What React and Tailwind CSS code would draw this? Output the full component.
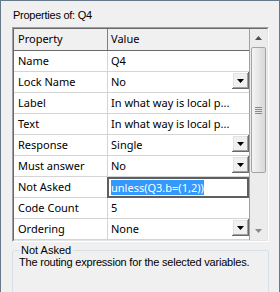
import React from 'react';

const rows = [
  { name: 'Name', value: 'Q4' },
  { name: 'Lock Name', value: 'No', drop: true },
  { name: 'Label', value: 'In what way is local p...' },
  { name: 'Text', value: 'In what way is local p...' },
  { name: 'Response', value: 'Single', drop: true },
  { name: 'Must answer', value: 'No', drop: true },
  { name: 'Not Asked', value: 'unless(Q3.b=(1,2))', edit: true },
  { name: 'Code Count', value: '5' },
  { name: 'Ordering', value: 'None', drop: true },
];

function DropButton() {
  return (
    <div className="w-[17px] h-[17px] shrink-0 flex items-center justify-center bg-[#f0f0f0] shadow-[inset_-1px_-1px_0_#696969,inset_1px_1px_0_#ffffff,inset_-2px_-2px_0_#a0a0a0,inset_2px_2px_0_#e3e3e3]">
      <svg width="7" height="4" viewBox="0 0 7 4">
        <polygon points="0,0 7,0 3.5,4" fill="#000" />
      </svg>
    </div>
  );
}

function Arrow({ down, color }) {
  return (
    <svg width="7" height="4" viewBox="0 0 7 4">
      <polygon points={down ? '0,0 7,0 3.5,4' : '0,4 7,4 3.5,0'} fill={color} />
    </svg>
  );
}

export default function App() {
  return (
    <div className="w-[280px] h-[292px] bg-[#f0f0f0] border-x border-t border-[#66788a] overflow-hidden flex flex-col text-black font-['Liberation_Sans',Arial,sans-serif]">
      {/* Title */}
      <div className="h-[26px] shrink-0 pl-[12px] pt-[8px] text-[11px] leading-[12px] tracking-[-0.25px]">
        Properties of: Q4
      </div>

      {/* Property grid */}
      <div className="ml-[11px] w-[257px] h-[215px] shrink-0 border border-t-[#a0a0a0] border-l-[#a0a0a0] border-r-white border-b-white">
        <div className="h-full border border-t-[#696969] border-l-[#696969] border-r-[#e3e3e3] border-b-[#e3e3e3] flex">
          <div className="w-[236px] bg-white border-r border-[#a0a0a0] flex flex-col text-[11px] font-['Noto_Sans','Open_Sans',sans-serif]">
            {/* Header */}
            <div className="h-[22px] shrink-0 flex bg-[#f0f0f0] border-b border-[#696969]">
              <div className="w-[94px] border-r border-[#808080] pl-[4px] flex items-center">Property</div>
              <div className="flex-1 pl-[3px] flex items-center">Value</div>
            </div>
            {rows.map((r) => (
              <div key={r.name} className="h-[21px] shrink-0 flex border-b border-[#d4d4d4]">
                <div className="w-[94px] shrink-0 border-r border-[#d4d4d4] pl-[4px] flex items-center whitespace-nowrap">
                  {r.name}
                </div>
                {r.edit ? (
                  <div className="flex-1 -ml-px h-[21px] border-2 border-[#5f5f5f] bg-white pl-[2px] flex items-center">
                    <span className="bg-[#3399ff] text-white leading-[15px] whitespace-nowrap">{r.value}</span>
                  </div>
                ) : (
                  <div className="flex-1 flex items-start overflow-hidden">
                    <span className="flex-1 pl-[3px] h-full flex items-center whitespace-nowrap overflow-hidden">
                      {r.value}
                    </span>
                    {r.drop && <DropButton />}
                  </div>
                )}
              </div>
            ))}
          </div>

          {/* Scrollbar */}
          <div className="w-[17px] flex flex-col bg-[#ececec]">
            <div className="h-[18px] shrink-0 flex items-center justify-center">
              <Arrow color="#4d4d4d" />
            </div>
            <div className="h-[126px] shrink-0 mx-[1px] rounded-[2px] border border-[#a4a4a4] bg-gradient-to-r from-[#f4f4f4] to-[#d9d9d9] flex flex-col items-center justify-center gap-[1px]">
              <div className="w-[7px] h-px bg-[#8a8a8a]" />
              <div className="w-[7px] h-px bg-[#8a8a8a]" />
              <div className="w-[7px] h-px bg-[#8a8a8a]" />
              <div className="w-[7px] h-px bg-[#8a8a8a]" />
            </div>
            <div className="flex-1" />
            <div className="h-[18px] shrink-0 flex items-center justify-center">
              <Arrow down color="#8a8a8a" />
            </div>
          </div>
        </div>
      </div>

      {/* Description group box */}
      <div className="mt-[8px] ml-[11px] w-[257px] h-[80px] shrink-0 border border-[#d5dfe5] rounded-[3px]">
        <div className="-mt-[7px] ml-[6px] w-fit px-[2px] bg-[#f0f0f0] text-[11px] leading-[12px]">Not Asked</div>
        <div className="ml-[6px] text-[11px] leading-[12px] tracking-[-0.2px]">
          The routing expression for the selected variables.
        </div>
      </div>
    </div>
  );
}
